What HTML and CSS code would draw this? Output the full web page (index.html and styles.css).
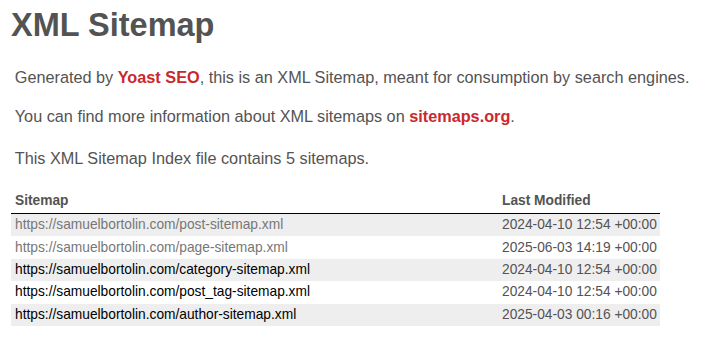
FILE: index.html
```html
<!DOCTYPE html>
<html lang="en">
<head>
<meta charset="utf-8">
<title>XML Sitemap</title>
<link rel="stylesheet" href="styles.css">
</head>
<body>
<div class="content">
  <h1 class="title">XML Sitemap</h1>
  <p class="expl expl-first">Generated by <a class="brand" href="#">Yoast SEO</a>, this is an XML Sitemap, meant for consumption by search engines.</p>
  <p class="expl expl-second">You can find more information about XML sitemaps on <a class="brand" href="#">sitemaps.org</a>.</p>
  <p class="expl expl-third">This XML Sitemap Index file contains 5 sitemaps.</p>
  <table class="sitemap">
    <colgroup>
      <col class="col-url">
      <col class="col-date">
    </colgroup>
    <thead>
      <tr>
        <th>Sitemap</th>
        <th>Last Modified</th>
      </tr>
    </thead>
    <tbody>
      <tr class="odd">
        <td><a class="link visited" href="#">https://samuelbortolin.com/post-sitemap.xml</a></td>
        <td>2024-04-10 12:54 +00:00</td>
      </tr>
      <tr>
        <td><a class="link visited" href="#">https://samuelbortolin.com/page-sitemap.xml</a></td>
        <td>2025-06-03 14:19 +00:00</td>
      </tr>
      <tr class="odd">
        <td><a class="link" href="#">https://samuelbortolin.com/category-sitemap.xml</a></td>
        <td>2024-04-10 12:54 +00:00</td>
      </tr>
      <tr>
        <td><a class="link" href="#">https://samuelbortolin.com/post_tag-sitemap.xml</a></td>
        <td>2024-04-10 12:54 +00:00</td>
      </tr>
      <tr class="odd">
        <td><a class="link" href="#">https://samuelbortolin.com/author-sitemap.xml</a></td>
        <td>2025-04-03 00:16 +00:00</td>
      </tr>
    </tbody>
  </table>
</div>
</body>
</html>
```

FILE: styles.css
```css
html, body {
  margin: 0;
  padding: 0;
  background: #ffffff;
}

body {
  font-family: "Liberation Sans", Arial, Helvetica, sans-serif;
  font-size: 16.25px;
  color: #545353;
}

.content {
  padding: 0 11px;
}

.title {
  margin: 6px 0 0 0;
  font-size: 32.5px;
  line-height: 38px;
  font-weight: bold;
  color: #545353;
}

.expl {
  margin: 0 3.75px;
  font-size: 16.25px;
  line-height: 19.5px;
}

.expl-first {
  margin-top: 24px;
}

.expl-second {
  margin-top: 19px;
}

.expl-third {
  margin-top: 22.5px;
}

.brand {
  color: #c9292e;
  font-weight: bold;
  text-decoration: none;
}

.sitemap {
  margin-top: 22px;
  border: none;
  border-collapse: collapse;
  border-spacing: 0;
  table-layout: fixed;
  width: 649px;
}

.col-url {
  width: 487px;
}

.col-date {
  width: 162px;
}

.sitemap th {
  text-align: left;
  font-size: 13.75px;
  line-height: 16px;
  font-weight: bold;
  padding: 3px 4px 4px 4px;
  border-bottom: 1px solid #000;
  white-space: nowrap;
}

.sitemap td {
  font-size: 13.75px;
  line-height: 16px;
  padding: 3.2px 4px;
  white-space: nowrap;
}

.sitemap tr.odd td {
  background-color: #eeeeee;
}

.link {
  color: #000;
  text-decoration: none;
}

.link.visited {
  color: #777777;
}
```
